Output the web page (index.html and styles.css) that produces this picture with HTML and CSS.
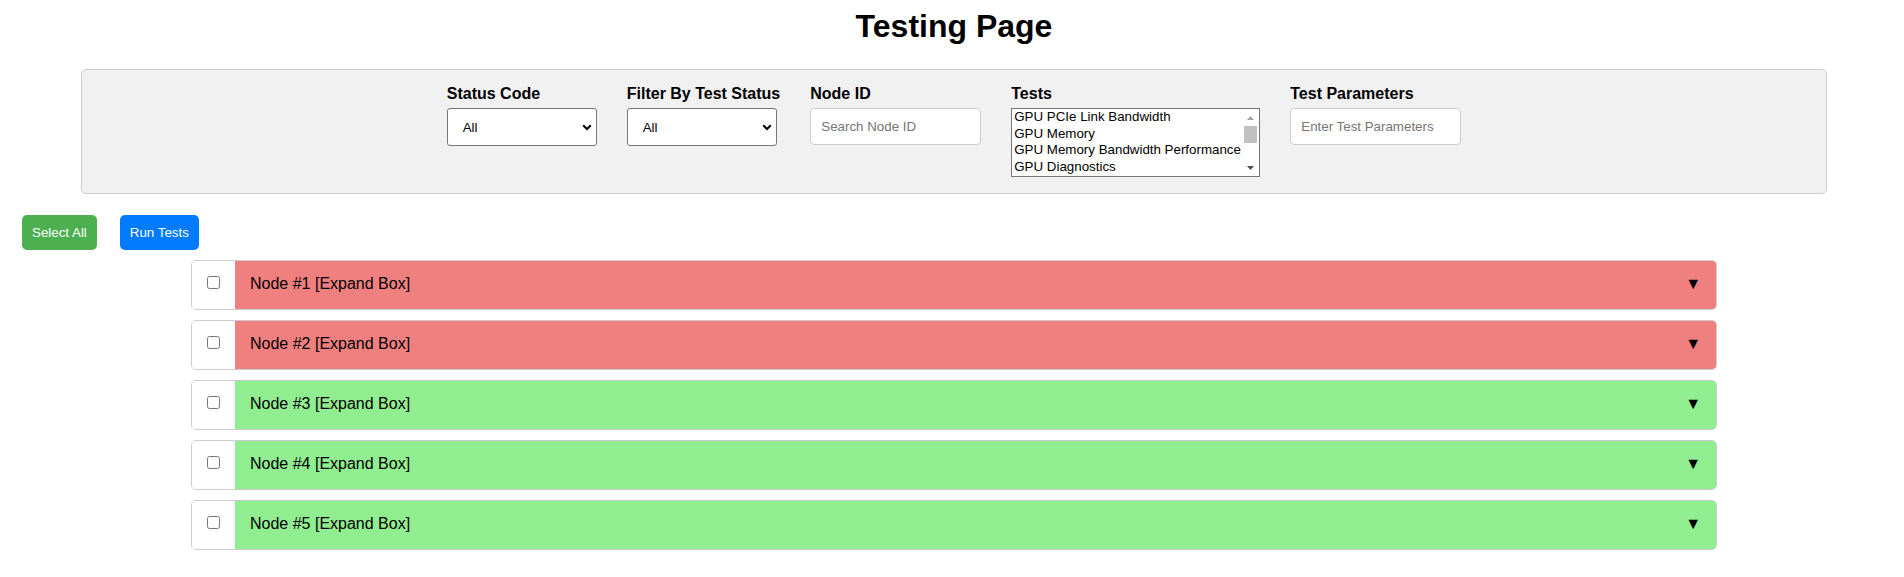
FILE: index.html
```html
<!DOCTYPE html>
<html lang="en">
<head>
<meta charset="utf-8">
<title>Testing Page</title>
<link rel="stylesheet" href="styles.css">
</head>
<body>
<div class="page">
  <h1 class="title">Testing Page</h1>

  <div class="filters">
    <div class="group">
      <label class="label">Status Code</label>
      <div class="select-wrap">
        <select class="select">
          <option>All</option>
          <option>Passed</option>
          <option>Failed</option>
        </select>
        <svg class="chevron" width="10" height="7" viewBox="0 0 10 7"><polyline points="1.2,1.2 5,5 8.8,1.2" fill="none" stroke="#000" stroke-width="2"/></svg>
      </div>
    </div>
    <div class="group">
      <label class="label">Filter By Test Status</label>
      <div class="select-wrap">
        <select class="select">
          <option>All</option>
          <option>Passed</option>
          <option>Failed</option>
        </select>
        <svg class="chevron" width="10" height="7" viewBox="0 0 10 7"><polyline points="1.2,1.2 5,5 8.8,1.2" fill="none" stroke="#000" stroke-width="2"/></svg>
      </div>
    </div>
    <div class="group">
      <label class="label">Node ID</label>
      <input class="input" type="text" placeholder="Search Node ID">
    </div>
    <div class="group">
      <label class="label">Tests</label>
      <div class="listbox">
        <div class="options">
          <div class="opt">GPU PCIe Link Bandwidth</div>
          <div class="opt">GPU Memory</div>
          <div class="opt">GPU Memory Bandwidth Performance</div>
          <div class="opt">GPU Diagnostics</div>
        </div>
        <div class="scrollbar">
          <div class="sb-btn"><svg width="7" height="4" viewBox="0 0 7 4"><polygon points="0,4 3.5,0 7,4" fill="#a3a3a3"/></svg></div>
          <div class="sb-track"><div class="sb-thumb"></div></div>
          <div class="sb-btn"><svg width="7" height="4" viewBox="0 0 7 4"><polygon points="0,0 3.5,4 7,0" fill="#505050"/></svg></div>
        </div>
      </div>
    </div>
    <div class="group">
      <label class="label">Test Parameters</label>
      <input class="input" type="text" placeholder="Enter Test Parameters">
    </div>
  </div>

  <div class="actions">
    <button class="btn btn-green">Select All</button>
    <button class="btn btn-blue">Run Tests</button>
  </div>

  <div class="nodes">
    <div class="node">
      <div class="node-check"><input class="checkbox" type="checkbox"></div>
      <div class="node-head failed"><span>Node #1 [Expand Box]</span><span class="caret">▼</span></div>
    </div>
    <div class="node">
      <div class="node-check"><input class="checkbox" type="checkbox"></div>
      <div class="node-head failed"><span>Node #2 [Expand Box]</span><span class="caret">▼</span></div>
    </div>
    <div class="node">
      <div class="node-check"><input class="checkbox" type="checkbox"></div>
      <div class="node-head passed"><span>Node #3 [Expand Box]</span><span class="caret">▼</span></div>
    </div>
    <div class="node">
      <div class="node-check"><input class="checkbox" type="checkbox"></div>
      <div class="node-head passed"><span>Node #4 [Expand Box]</span><span class="caret">▼</span></div>
    </div>
    <div class="node">
      <div class="node-check"><input class="checkbox" type="checkbox"></div>
      <div class="node-head passed"><span>Node #5 [Expand Box]</span><span class="caret">▼</span></div>
    </div>
  </div>
</div>
</body>
</html>
```

FILE: styles.css
```css
* { box-sizing: border-box; }

body {
  margin: 8px;
  font-family: "Liberation Sans", Arial, sans-serif;
  color: #000;
  background: #fff;
}

.page {
  padding-left: 4px;
}

.title {
  margin: 0 0 24px;
  text-align: center;
  font-size: 32px;
  font-weight: bold;
}

.filters {
  width: 1746px;
  margin: 0 auto;
  background: #f1f1f1;
  border: 1px solid #cccccc;
  border-radius: 5px;
  padding: 15px 0 16px;
  display: flex;
  justify-content: center;
  align-items: flex-start;
  gap: 30px;
}

.group {
  display: flex;
  flex-direction: column;
}

.label {
  display: block;
  font-size: 16px;
  font-weight: bold;
  margin-bottom: 5px;
  white-space: nowrap;
}

.select-wrap {
  position: relative;
  width: 150px;
}

.select {
  appearance: none;
  -webkit-appearance: none;
  display: block;
  width: 150px;
  height: 38px;
  margin: 0;
  padding: 0 0 0 15px;
  background: #fff;
  border: 1px solid #767676;
  border-radius: 3px;
  font-family: "Liberation Sans", Arial, sans-serif;
  font-size: 13.333px;
  color: #000;
}

.chevron {
  position: absolute;
  right: 5px;
  top: 16px;
  pointer-events: none;
}

.input {
  display: block;
  width: 171px;
  height: 37px;
  margin: 0;
  padding: 0 10px;
  background: #fff;
  border: 1px solid #cccccc;
  border-radius: 4px;
  font-family: "Liberation Sans", Arial, sans-serif;
  font-size: 13.333px;
  color: #000;
}

.input::placeholder {
  color: #757575;
}

.listbox {
  width: 249px;
  height: 69px;
  border: 1px solid #767676;
  background: #fff;
  display: flex;
  overflow: hidden;
}

.options {
  flex: 1;
  overflow: hidden;
}

.opt {
  font-size: 13.333px;
  line-height: 15.67px;
  padding: 0 2px 1px;
  white-space: nowrap;
}

.scrollbar {
  width: 17px;
  display: flex;
  flex-direction: column;
  background: #fff;
}

.sb-btn {
  height: 17px;
  display: flex;
  align-items: center;
  justify-content: center;
}

.sb-track {
  flex: 1;
  padding: 0 2px;
}

.sb-thumb {
  height: 17px;
  background: #c1c1c1;
}

.actions {
  display: flex;
  gap: 23px;
  margin: 21px 0 0 10px;
}

.btn {
  border: none;
  border-radius: 5px;
  padding: 10px;
  font-family: "Liberation Sans", Arial, sans-serif;
  font-size: 13.333px;
  color: #fff;
  cursor: pointer;
}

.btn-green { background: #4caf50; }
.btn-blue { background: #007bff; }

.nodes {
  margin-top: 10px;
}

.node {
  width: 1526px;
  height: 50px;
  margin: 0 auto 10px;
  border: 1px solid #cccccc;
  border-radius: 5px;
  overflow: hidden;
  display: flex;
}

.node-check {
  width: 43px;
  padding: 15px;
  background: #fff;
  display: flex;
  align-items: flex-start;
}

.checkbox {
  margin: 0;
  width: 13px;
  height: 13px;
}

.node-head {
  flex: 1;
  display: flex;
  justify-content: space-between;
  align-items: flex-start;
  padding: 14px 15px 0;
  font-size: 16px;
}

.failed { background: #f08080; }
.passed { background: #90ee90; }

.caret {
  font-size: 16px;
}
```
